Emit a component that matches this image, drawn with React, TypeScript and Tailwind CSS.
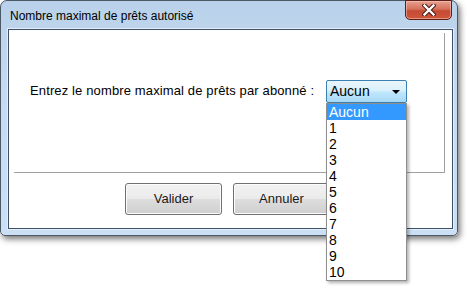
const items = ['Aucun', '1', '2', '3', '4', '5', '6', '7', '8', '9', '10'];

function CloseGlyph() {
  return (
    <svg width="14" height="12" viewBox="0 0 14 12">
      <path d="M2.5 1.5 L11.5 10.5 M11.5 1.5 L2.5 10.5" stroke="#4a1a14" strokeWidth="4.4" strokeLinecap="square" />
      <path d="M2.5 1.5 L11.5 10.5 M11.5 1.5 L2.5 10.5" stroke="#ffffff" strokeWidth="2.4" strokeLinecap="square" />
    </svg>
  );
}

function WinButton({ label }: { label: string }) {
  return (
    <button className="relative w-[97px] h-[32px] rounded-[3px] border border-[#707070] bg-[linear-gradient(#f2f2f2_0%,#ebebeb_48%,#dddddd_52%,#cfcfcf_100%)] shadow-[inset_0_0_0_1px_#fcfcfc] text-[13px] text-[#1a1a1a]">
      {label}
    </button>
  );
}

export default function App() {
  return (
    <div className="w-[467px] h-[288px] bg-white relative font-['Liberation_Sans',Arial,sans-serif]">
      <div className="w-[458px] h-[236px] flex flex-col rounded-t-[7px] rounded-b-[5px] border border-[#4b5866] bg-[linear-gradient(180deg,#b9d1ea_0%,#c6dbf1_40%,#cbdff5_100%)] shadow-[2px_3px_6px_rgba(0,0,0,0.55)]">
        {/* title bar */}
        <div className="h-[28px] flex items-start relative">
          <span className="mt-[7px] ml-[9px] text-[12px] text-black leading-[16px]">Nombre maximal de prêts autorisé</span>
          <div className="absolute right-[5px] top-[-1px] w-[47px] h-[20px] rounded-b-[5px] border border-[#5a1f17] bg-[linear-gradient(180deg,#e8a190_0%,#d6715b_45%,#c44a33_55%,#d0583d_100%)] flex items-center justify-center shadow-[inset_0_0_0_1px_rgba(255,210,200,0.5)]">
            <CloseGlyph />
          </div>
        </div>
        {/* client area */}
        <div className="flex-1 mx-[7px] mb-[6px] mr-[4px] border border-[#3e5168] bg-white flex flex-col shadow-[0_0_0_1px_#e3eefa]">
          <div className="mt-[3px] ml-[5px] mr-[7px] h-[140px] border-r border-b border-[#a0a0a0] flex items-start pt-[47px] pl-[16px]">
            <span className="w-[296px] text-[13px] tracking-[0.13px] text-black leading-[22px]">Entrez le nombre maximal de prêts par abonné :</span>
            <div className="relative">
              <div className="w-[81px] h-[23px] border border-[#3c7fb1] rounded-[2px] bg-[linear-gradient(180deg,#eaf6fd_0%,#d9f0fc_45%,#bee6fd_55%,#a7d9f5_100%)] flex items-center pl-[3px] text-[14px] text-black">
                <span className="flex-1">Aucun</span>
                <svg width="8" height="4" viewBox="0 0 8 4" className="mr-[6px]">
                  <path d="M0 0 H8 L4 4 Z" fill="#000" />
                </svg>
              </div>
              <div className="absolute left-0 top-[23px] w-[81px] border border-[#8e8f8f] bg-white shadow-[2px_2px_3px_rgba(0,0,0,0.3)] z-10">
                {items.map((it, i) => (
                  <div
                    key={it}
                    className={
                      i === 0
                        ? 'h-[16px] leading-[16px] pl-[2px] text-[14px] bg-[#3399ff] text-white'
                        : 'h-[16px] leading-[16px] pl-[2px] text-[14px] text-black'
                    }
                  >
                    {it}
                  </div>
                ))}
              </div>
            </div>
          </div>
          <div className="flex pl-[116px] pt-[10px] gap-[11px]">
            <WinButton label="Valider" />
            <WinButton label="Annuler" />
          </div>
        </div>
      </div>
    </div>
  );
}
